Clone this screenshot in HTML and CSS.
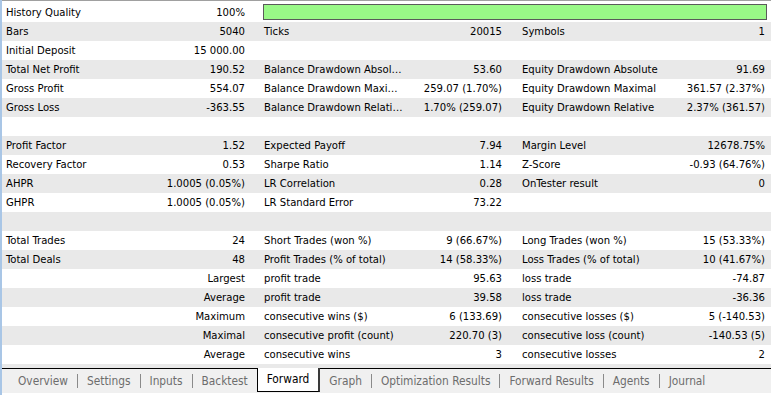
FILE: index.html
```html
<!DOCTYPE html>
<html lang="en">
<head>
    <meta charset="UTF-8">
    <meta name="viewport" content="width=device-width, initial-scale=1.0">
    <title>Strategy Tester - Forward</title>
    <link rel="stylesheet" href="styles.css">
</head>
<body>
    <div class="tester">
        <div class="report">
            <div class="row">
                <span class="lbl">History Quality</span><span class="val">100%</span>
                <span class="quality"><span class="quality-bar"></span></span>
            </div>
            <div class="row">
                <span class="lbl">Bars</span><span class="val">5040</span>
                <span class="lbl">Ticks</span><span class="val">20015</span>
                <span class="lbl">Symbols</span><span class="val">1</span>
            </div>
            <div class="row">
                <span class="lbl">Initial Deposit</span><span class="val">15 000.00</span>
                <span class="lbl"></span><span class="val"></span>
                <span class="lbl"></span><span class="val"></span>
            </div>
            <div class="row">
                <span class="lbl">Total Net Profit</span><span class="val">190.52</span>
                <span class="lbl">Balance Drawdown Absolute</span><span class="val">53.60</span>
                <span class="lbl">Equity Drawdown Absolute</span><span class="val">91.69</span>
            </div>
            <div class="row">
                <span class="lbl">Gross Profit</span><span class="val">554.07</span>
                <span class="lbl">Balance Drawdown Maximal</span><span class="val">259.07 (1.70%)</span>
                <span class="lbl">Equity Drawdown Maximal</span><span class="val">361.57 (2.37%)</span>
            </div>
            <div class="row">
                <span class="lbl">Gross Loss</span><span class="val">-363.55</span>
                <span class="lbl">Balance Drawdown Relative</span><span class="val">1.70% (259.07)</span>
                <span class="lbl">Equity Drawdown Relative</span><span class="val">2.37% (361.57)</span>
            </div>
            <div class="row"></div>
            <div class="row">
                <span class="lbl">Profit Factor</span><span class="val">1.52</span>
                <span class="lbl">Expected Payoff</span><span class="val">7.94</span>
                <span class="lbl">Margin Level</span><span class="val">12678.75%</span>
            </div>
            <div class="row">
                <span class="lbl">Recovery Factor</span><span class="val">0.53</span>
                <span class="lbl">Sharpe Ratio</span><span class="val">1.14</span>
                <span class="lbl">Z-Score</span><span class="val">-0.93 (64.76%)</span>
            </div>
            <div class="row">
                <span class="lbl">AHPR</span><span class="val">1.0005 (0.05%)</span>
                <span class="lbl">LR Correlation</span><span class="val">0.28</span>
                <span class="lbl">OnTester result</span><span class="val">0</span>
            </div>
            <div class="row">
                <span class="lbl">GHPR</span><span class="val">1.0005 (0.05%)</span>
                <span class="lbl">LR Standard Error</span><span class="val">73.22</span>
                <span class="lbl"></span><span class="val"></span>
            </div>
            <div class="row"></div>
            <div class="row">
                <span class="lbl">Total Trades</span><span class="val">24</span>
                <span class="lbl">Short Trades (won %)</span><span class="val">9 (66.67%)</span>
                <span class="lbl">Long Trades (won %)</span><span class="val">15 (53.33%)</span>
            </div>
            <div class="row">
                <span class="lbl">Total Deals</span><span class="val">48</span>
                <span class="lbl">Profit Trades (% of total)</span><span class="val">14 (58.33%)</span>
                <span class="lbl">Loss Trades (% of total)</span><span class="val">10 (41.67%)</span>
            </div>
            <div class="row">
                <span class="lbl"></span><span class="val">Largest</span>
                <span class="lbl">profit trade</span><span class="val">95.63</span>
                <span class="lbl">loss trade</span><span class="val">-74.87</span>
            </div>
            <div class="row">
                <span class="lbl"></span><span class="val">Average</span>
                <span class="lbl">profit trade</span><span class="val">39.58</span>
                <span class="lbl">loss trade</span><span class="val">-36.36</span>
            </div>
            <div class="row">
                <span class="lbl"></span><span class="val">Maximum</span>
                <span class="lbl">consecutive wins ($)</span><span class="val">6 (133.69)</span>
                <span class="lbl">consecutive losses ($)</span><span class="val">5 (-140.53)</span>
            </div>
            <div class="row">
                <span class="lbl"></span><span class="val">Maximal</span>
                <span class="lbl">consecutive profit (count)</span><span class="val">220.70 (3)</span>
                <span class="lbl">consecutive loss (count)</span><span class="val">-140.53 (5)</span>
            </div>
            <div class="row">
                <span class="lbl"></span><span class="val">Average</span>
                <span class="lbl">consecutive wins</span><span class="val">3</span>
                <span class="lbl">consecutive losses</span><span class="val">2</span>
            </div>
            <div class="row"></div>
        </div>
        <div class="tabs">
            <span class="tab">Overview</span><span class="sep"></span>
            <span class="tab">Settings</span><span class="sep"></span>
            <span class="tab">Inputs</span><span class="sep"></span>
            <span class="tab">Backtest</span>
            <span class="tab active">Forward</span>
            <span class="tab">Graph</span><span class="sep"></span>
            <span class="tab">Optimization Results</span><span class="sep"></span>
            <span class="tab">Forward Results</span><span class="sep"></span>
            <span class="tab">Agents</span><span class="sep"></span>
            <span class="tab">Journal</span>
        </div>
    </div>
</body>
</html>
```
FILE: styles.css
```css
body{
    margin: 0;
    background: #ffffff;
    font-family: "DejaVu Sans Condensed", "Liberation Sans", sans-serif;
    font-size: 11.2px;
    color: #000000;
}

.tester{
    width: 769px;
    height: 395px;
    border-left: 2px solid #a9c6e6;
    overflow: hidden;
}

.report{
    border-top: 1px solid #a0a0a0;
    padding-top: 2px;
    height: 365px;
    overflow: hidden;
}

.row{
    display: grid;
    grid-template-columns: 110px 146px 152px 106px 152px 1fr;
    height: 19px;
    line-height: 19px;
    white-space: nowrap;
}

.row:nth-child(even){
    background: #e9e9e9;
}

.lbl{
    padding-left: 4px;
    overflow: hidden;
    text-overflow: ellipsis;
}

.row .lbl:nth-child(3){
    padding-left: 6px;
    padding-right: 6px;
}

.row .lbl:nth-child(5){
    padding-left: 6px;
    padding-right: 1px;
}

.val{
    text-align: right;
    padding-right: 13px;
}

.row .val:nth-child(4){
    padding-right: 14px;
}

.row .val:nth-child(6){
    padding-right: 6px;
}

.quality{
    grid-column: 3 / 7;
    padding: 1px 4px 3px 5px;
}

.quality-bar{
    display: block;
    height: 14px;
    background: #99f887;
    border: 1px solid #5a5a5a;
}

.tabs{
    display: flex;
    align-items: center;
    height: 24px;
    padding-left: 7px;
    border-top: 1px solid #000000;
    background: #f0f0f0;
    color: #6d6d6d;
    font-size: 11.8px;
    white-space: nowrap;
}

.tab{
    padding: 0 9px;
    line-height: 22px;
}

.tab.active{
    position: relative;
    top: -1px;
    height: 23px;
    line-height: 23px;
    background: #ffffff;
    color: #000000;
    border: 1px solid #000000;
    border-top: none;
    border-right: 2px solid #3a3a3a;
}

.sep{
    width: 1px;
    height: 14px;
    background: #8a8a8a;
}
```
